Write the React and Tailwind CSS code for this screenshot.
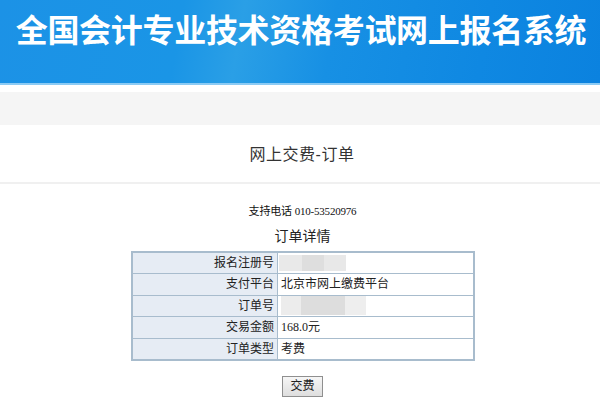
import React from 'react';

const rows = [
    { label: '报名注册号', value: null, mask: 'reg' },
    { label: '支付平台', value: '北京市网上缴费平台' },
    { label: '订单号', value: null, mask: 'order' },
    { label: '交易金额', value: '168.0元', serif: true },
    { label: '订单类型', value: '考费' },
];

function Mask({ kind }) {
    // blurred-out personal numbers
    if (kind === 'reg') {
        return (
            <div className="flex h-[16px] w-[67px] -ml-[2px]">
                <div className="w-[23px] bg-[#e9e9e9]" />
                <div className="w-[22px] bg-[#dedede]" />
                <div className="w-[22px] bg-[#e8e8e8]" />
            </div>
        );
    }
    return (
        <div className="flex h-[19px] w-[85px]">
            <div className="w-[20px] bg-[#ececec]" />
            <div className="w-[44px] bg-[#dddddd]" />
            <div className="w-[21px] bg-[#eeeeee]" />
        </div>
    );
}

export default function App() {
    return (
        <div className="w-[600px] h-[409px] bg-white overflow-hidden" style={{ fontFamily: '"Liberation Sans", "Noto Sans CJK SC", sans-serif' }}>
            <div className="h-[83px] bg-[linear-gradient(100deg,#1c92e6_0%,#1a95e6_30%,#2a9fe6_40%,#1790e4_55%,#0f88e2_80%,#0b82df_100%)] flex items-start justify-center pt-[12px] pl-[2px]">
                <h1 className="text-white font-bold text-[32px] leading-[38px] tracking-[-0.3px] whitespace-nowrap">全国会计专业技术资格考试网上报名系统</h1>
            </div>
            <div className="h-[2px] bg-[#8ccbf4]" />
            <div className="h-[7px] bg-white" />
            <div className="h-[33px] bg-[#f5f5f5]" />

            <div className="h-[57px] flex items-center justify-center pt-[2px] pl-[4px]">
                <h2 className="text-[16px] text-[#333] tracking-[0.5px]">网上交费-订单</h2>
            </div>
            <div className="h-[2px] bg-[#f0f0f0]" />

            <div className="flex flex-col items-center pt-[19px] pl-[5px]">
                <p className="text-[11px] leading-[16px] text-[#111] tracking-[-0.2px]">
                    支持电话 <span style={{ fontFamily: '"Liberation Serif", serif' }}>010-53520976</span>
                </p>
                <p className="mt-[8px] text-[14px] leading-[18px] text-[#222]">订单详情</p>

                <table className="mt-[6px] w-[344px] border-collapse border-2 border-[#a8bccd] text-[12px] text-[#222]">
                    <tbody>
                        {rows.map((r) => (
                            <tr key={r.label} className="h-[21.5px]">
                                <td className="w-[146px] bg-[#e6ecf4] border border-[#a8bccd] text-right pr-[3px] p-0">{r.label}</td>
                                <td className="border border-[#a8bccd] pl-[3px] p-0 bg-white">
                                    {r.value ? (
                                        <span style={r.serif ? { fontFamily: '"Liberation Serif", "Noto Sans CJK SC", serif' } : undefined}>{r.value}</span>
                                    ) : (
                                        <Mask kind={r.mask} />
                                    )}
                                </td>
                            </tr>
                        ))}
                    </tbody>
                </table>

                <button className="mt-[15px] w-[41px] h-[21px] border border-[#8f8f8f] bg-[linear-gradient(#f6f6f6,#dedede)] text-[12px] leading-none text-[#222]">交费</button>
            </div>
        </div>
    );
}
